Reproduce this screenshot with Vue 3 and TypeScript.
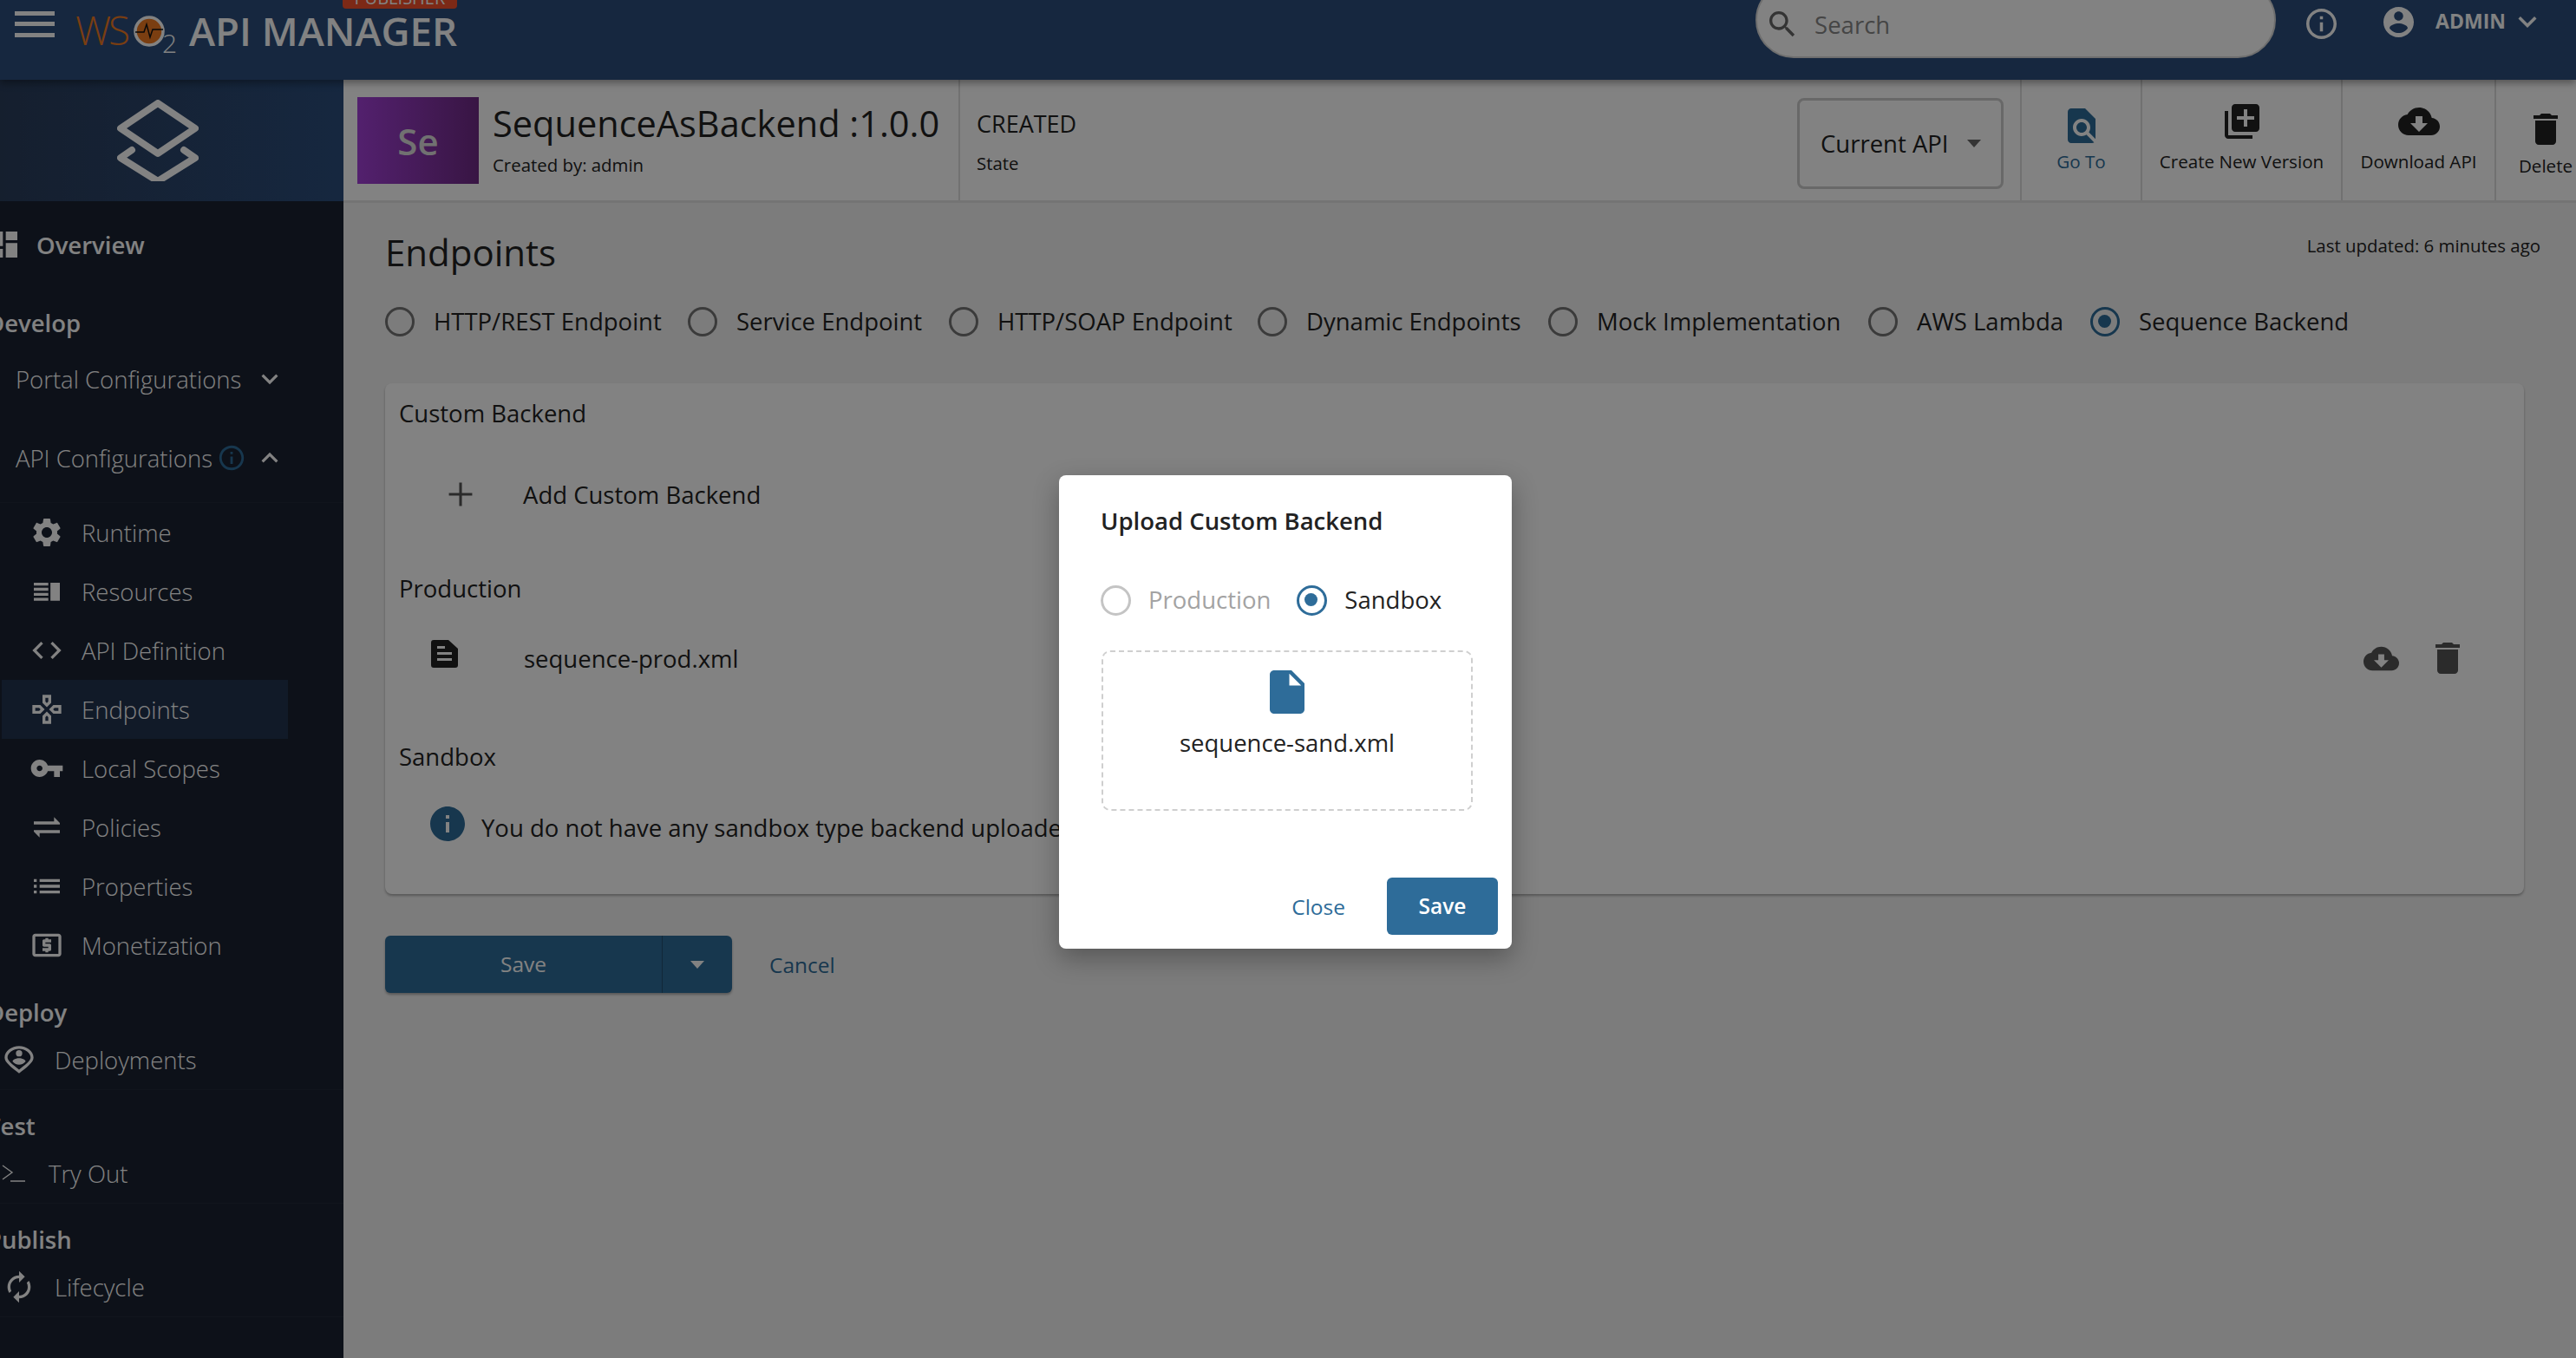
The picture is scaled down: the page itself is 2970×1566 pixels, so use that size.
<script setup lang="ts">
interface NavItem {
  label: string;
  icon: string;
  active?: boolean;
}

const icons: Record<string, string> = {
  dashboard: 'M3 13h8V3H3v10zm0 8h8v-6H3v6zm10 0h8V11h-8v10zm0-18v6h8V3h-8z',
  settings: 'M19.14 12.94c.04-.3.06-.61.06-.94 0-.32-.02-.64-.07-.94l2.03-1.58c.18-.14.23-.41.12-.61l-1.92-3.32c-.12-.22-.37-.29-.59-.22l-2.39.96c-.5-.38-1.03-.7-1.62-.94l-.36-2.54c-.04-.24-.24-.41-.48-.41h-3.84c-.24 0-.43.17-.47.41l-.36 2.54c-.59.24-1.13.57-1.62.94l-2.39-.96c-.22-.08-.47 0-.59.22L2.74 8.87c-.12.21-.08.47.12.61l2.03 1.58c-.05.3-.09.63-.09.94s.02.64.07.94l-2.03 1.58c-.18.14-.23.41-.12.61l1.92 3.32c.12.22.37.29.59.22l2.39-.96c.5.38 1.03.7 1.62.94l.36 2.54c.05.24.24.41.48.41h3.84c.24 0 .44-.17.47-.41l.36-2.54c.59-.24 1.13-.56 1.62-.94l2.39.96c.22.08.47 0 .59-.22l1.92-3.32c.12-.22.07-.47-.12-.61l-2.01-1.58zM12 15.6c-1.98 0-3.6-1.62-3.6-3.6s1.62-3.6 3.6-3.6 3.6 1.62 3.6 3.6-1.62 3.6-3.6 3.6z',
  resources: 'M3 6h10v2H3zm0 3.5h10v2H3zM3 13h10v2H3zm0 3.5h10v2H3zM14.5 6H21v12.5h-6.5z',
  code: 'M9.4 16.6L4.8 12l4.6-4.6L8 6l-6 6 6 6 1.4-1.4zm5.2 0l4.6-4.6-4.6-4.6L16 6l6 6-6 6-1.4-1.4z',
  endpoints: 'M13 4v2.67l-1 1-1-1V4h2m7 7v2h-2.67l-1-1 1-1H20M6.67 11l1 1-1 1H4v-2h2.67M12 16.33l1 1V20h-2v-2.67l1-1M15 2H9v5.5l3 3 3-3V2zm7 7h-5.5l-3 3 3 3H22V9zM7.5 9H2v6h5.5l3-3-3-3zm4.5 4.5l-3 3V22h6v-5.5l-3-3z',
  key: 'M12.65 10C11.83 7.67 9.61 6 7 6c-3.31 0-6 2.69-6 6s2.69 6 6 6c2.61 0 4.83-1.67 5.65-4H17v4h4v-4h2v-4H12.65zM7 14c-1.1 0-2-.9-2-2s.9-2 2-2 2 .9 2 2-.9 2-2 2z',
  swap: 'M21 9l-4-4v3H3v2h18v-1zM3 15l4 4v-3h14v-2H3v1z',
  list: 'M3 13h2v-2H3v2zm0 4h2v-2H3v2zm0-8h2V7H3v2zm4 4h14v-2H7v2zm0 4h14v-2H7v2zM7 7v2h14V7H7z',
  money: 'M11 17h2v-1h1c.55 0 1-.45 1-1v-3c0-.55-.45-1-1-1h-3v-1h4V8h-2V7h-2v1h-1c-.55 0-1 .45-1 1v3c0 .55.45 1 1 1h3v1H9v2h2v1zm9-13H4c-1.11 0-1.99.89-1.99 2L2 18c0 1.11.89 2 2 2h16c1.11 0 2-.89 2-2V6c0-1.11-.89-2-2-2zm0 14H4V6h16v12z',
  pin: 'M12 2.5C7 2.5 2 6 2 10.5c0 3.5 5 7 10 11 5-4 10-7.5 10-11 0-4.5-5-8-10-8zm0 2c4 0 8 2.8 8 6 0 2.3-4 5.2-8 8.4-4-3.2-8-6.1-8-8.4 0-3.2 4-6 8-6zm0 .9a2.2 2.2 0 1 0 0 4.4 2.2 2.2 0 0 0 0-4.4zm0 5.6c-2 0-4.5 1-4.5 2.2 1 1.3 2.7 2.3 4.5 2.3s3.5-1 4.5-2.3c0-1.2-2.5-2.2-4.5-2.2z',
  cycle: 'M12 6v3l4-4-4-4v3c-4.42 0-8 3.58-8 8 0 1.57.46 3.03 1.24 4.26L6.7 14.8c-.45-.83-.7-1.79-.7-2.8 0-3.31 2.69-6 6-6zm6.76 1.74L17.3 9.2c.44.84.7 1.79.7 2.8 0 3.31-2.69 6-6 6v-3l-4 4 4 4v-3c4.42 0 8-3.58 8-8 0-1.57-.46-3.03-1.24-4.26z',
  search: 'M15.5 14h-.79l-.28-.27C15.41 12.59 16 11.11 16 9.5 16 5.91 13.09 3 9.5 3S3 5.91 3 9.5 5.91 16 9.5 16c1.61 0 3.09-.59 4.23-1.57l.27.28v.79l5 4.99L20.49 19l-4.99-5zm-6 0C7.01 14 5 11.99 5 9.5S7.01 5 9.5 5 14 7.01 14 9.5 11.99 14 9.5 14z',
  infoOutline: 'M11 7h2v2h-2zm0 4h2v6h-2zm1-9C6.48 2 2 6.48 2 12s4.48 10 10 10 10-4.48 10-10S17.52 2 12 2zm0 18c-4.41 0-8-3.59-8-8s3.59-8 8-8 8 3.59 8 8-3.59 8-8 8z',
  info: 'M12 2C6.48 2 2 6.48 2 12s4.48 10 10 10 10-4.48 10-10S17.52 2 12 2zm1 15h-2v-6h2v6zm0-8h-2V7h2v2z',
  account: 'M12 2C6.48 2 2 6.48 2 12s4.48 10 10 10 10-4.48 10-10S17.52 2 12 2zm0 3c1.66 0 3 1.34 3 3s-1.34 3-3 3-3-1.34-3-3 1.34-3 3-3zm0 14.2c-2.5 0-4.71-1.28-6-3.22.03-1.99 4-3.08 6-3.08 1.99 0 5.97 1.09 6 3.08-1.29 1.94-3.5 3.22-6 3.22z',
  findPage: 'M20 19.59V8l-6-6H6c-1.1 0-1.99.9-1.99 2L4 20c0 1.1.89 2 1.99 2H18c.45 0 .85-.15 1.19-.4l-4.43-4.43c-.8.52-1.74.83-2.76.83-2.76 0-5-2.24-5-5s2.24-5 5-5 5 2.24 5 5c0 1.02-.31 1.96-.83 2.75L20 19.59zM9 13c0 1.66 1.34 3 3 3s3-1.34 3-3-1.34-3-3-3-3 1.34-3 3z',
  libraryAdd: 'M4 6H2v14c0 1.1.9 2 2 2h14v-2H4V6zm16-4H8c-1.1 0-2 .9-2 2v12c0 1.1.9 2 2 2h12c1.1 0 2-.9 2-2V4c0-1.1-.9-2-2-2zm-1 9h-4v4h-2v-4H9V9h4V5h2v4h4v2z',
  cloud: 'M19.35 10.04C18.67 6.59 15.64 4 12 4 9.11 4 6.6 5.64 5.35 8.04 2.34 8.36 0 10.91 0 14c0 3.31 2.69 6 6 6h13c2.76 0 5-2.24 5-5 0-2.64-2.05-4.78-4.65-4.96zM17 13l-5 5-5-5h3V9h4v4h3z',
  trash: 'M6 19c0 1.1.9 2 2 2h8c1.1 0 2-.9 2-2V7H6v12zM19 4h-3.5l-1-1h-5l-1 1H5v2h14V4z',
  file: 'M6 2c-1.1 0-1.99.9-1.99 2L4 20c0 1.1.89 2 1.99 2H18c1.1 0 2-.9 2-2V8l-6-6H6zm7 7V3.5L18.5 9H13z',
  plus: 'M19 12.8h-6.2V19h-1.6v-6.2H5v-1.6h6.2V5h1.6v6.2H19v1.6z',
  chevronDown: 'M7.41 8.59L12 13.17l4.59-4.58L18 10l-6 6-6-6 1.41-1.41z',
  chevronUp: 'M7.41 15.41L12 10.83l4.59 4.58L18 14l-6-6-6 6 1.41 1.41z',
};

const apiConfigItems: NavItem[] = [
  { label: 'Runtime', icon: 'settings' },
  { label: 'Resources', icon: 'resources' },
  { label: 'API Definition', icon: 'code' },
  { label: 'Endpoints', icon: 'endpoints', active: true },
  { label: 'Local Scopes', icon: 'key' },
  { label: 'Policies', icon: 'swap' },
  { label: 'Properties', icon: 'list' },
  { label: 'Monetization', icon: 'money' },
];

const sections = [
  { title: 'Deploy', label: 'Deployments', icon: 'pin', cls: '' },
  { title: 'Test', label: 'Try Out', icon: '', cls: 'try' },
  { title: 'Publish', label: 'Lifecycle', icon: 'cycle', cls: '' },
];

const endpointTypes = [
  { label: 'HTTP/REST Endpoint', width: 349 },
  { label: 'Service Endpoint', width: 301 },
  { label: 'HTTP/SOAP Endpoint', width: 356 },
  { label: 'Dynamic Endpoints', width: 335 },
  { label: 'Mock Implementation', width: 369 },
  { label: 'AWS Lambda', width: 256 },
  { label: 'Sequence Backend', width: 0, checked: true },
];

const actions = [
  { label: 'Go To', icon: 'findPage', cls: 'goto' },
  { label: 'Create New Version', icon: 'libraryAdd', cls: 'create' },
  { label: 'Download API', icon: 'cloud', cls: 'download' },
  { label: 'Delete', icon: 'trash', cls: 'remove' },
];
</script>

<template>
  <div class="page">
    <header class="appbar">
      <svg class="burger" viewBox="0 0 46 30"><path fill="currentColor" d="M0 0h46v5H0zM0 12h46v5H0zM0 25h46v5H0z" /></svg>
      <div class="logo">
        <span class="logo-ws">WS</span>
        <svg class="logo-o" viewBox="0 0 36 38">
          <circle cx="18" cy="19" r="16" fill="#f07a22" stroke="#ffffff" stroke-width="3.5" />
          <path fill="none" stroke="#111" stroke-width="1.5" d="M2 20h10l3-9 4 15 3-9h12" />
        </svg>
        <span class="logo-two">2</span>
      </div>
      <div class="product">
        API MANAGER
        <span class="badge">PUBLISHER</span>
      </div>
      <div class="search">
        <svg class="search-icon" viewBox="3 3 18 18"><path fill="currentColor" :d="icons.search" /></svg>
        <span>Search</span>
      </div>
      <svg class="bar-info" viewBox="2 2 20 20"><path fill="currentColor" :d="icons.infoOutline" /></svg>
      <svg class="bar-user" viewBox="2 2 20 20"><path fill="currentColor" :d="icons.account" /></svg>
      <span class="bar-name">ADMIN</span>
      <svg class="bar-chevron" viewBox="6 8 12 8"><path fill="currentColor" :d="icons.chevronDown" /></svg>
    </header>

    <div class="body">
      <aside class="sidebar">
        <div class="side-top">
          <svg class="layers" viewBox="0 0 94 94" fill="none" stroke="currentColor" stroke-width="8" stroke-linejoin="round" stroke-linecap="round">
            <path d="M47 4L90 33 47 62 4 33z" />
            <path d="M17 58L4 67l43 27 43-27-13-9" />
          </svg>
        </div>
        <div class="overview">
          <svg viewBox="0 0 24 24"><path fill="currentColor" :d="icons.dashboard" /></svg>
          <span>Overview</span>
        </div>
        <div class="side-title develop">Develop</div>
        <div class="group portal">
          <span>Portal Configurations</span>
          <svg class="group-chevron" viewBox="0 0 24 24"><path fill="currentColor" :d="icons.chevronDown" /></svg>
        </div>
        <div class="group api">
          <span>API Configurations</span>
          <svg class="group-info" viewBox="0 0 24 24"><path fill="currentColor" :d="icons.infoOutline" /></svg>
          <svg class="group-chevron" viewBox="0 0 24 24"><path fill="currentColor" :d="icons.chevronUp" /></svg>
        </div>
        <ul class="sub-list">
          <li v-for="item in apiConfigItems" :key="item.label" class="sub-item" :class="{ active: item.active }">
            <svg viewBox="0 0 24 24"><path fill="currentColor" :d="icons[item.icon]" /></svg>
            <span>{{ item.label }}</span>
          </li>
        </ul>
        <section v-for="s in sections" :key="s.title" class="side-section">
          <div class="side-title">{{ s.title }}</div>
          <div class="side-row" :class="s.cls">
            <svg v-if="s.icon" viewBox="0 0 24 24"><path fill="currentColor" :d="icons[s.icon]" /></svg>
            <svg v-else viewBox="0 0 28 24" fill="none" stroke="currentColor" stroke-width="1.4"><path d="M1 3l11 8L1 19M10 21h17" /></svg>
            <span>{{ s.label }}</span>
          </div>
        </section>
      </aside>

      <main class="content">
        <div class="api-bar">
          <div class="thumb">Se</div>
          <div class="api-name">
            <div class="api-title">SequenceAsBackend :1.0.0</div>
            <div class="api-owner">Created by: admin</div>
          </div>
          <div class="api-state">
            <div class="state-value">CREATED</div>
            <div class="state-label">State</div>
          </div>
          <div class="version-select">
            <span>Current API</span>
            <i class="caret"></i>
          </div>
          <div v-for="a in actions" :key="a.label" class="action" :class="a.cls">
            <svg viewBox="0 0 24 24"><path fill="currentColor" :d="icons[a.icon]" /></svg>
            <span>{{ a.label }}</span>
          </div>
        </div>

        <div class="inner">
          <div class="head-row">
            <h1>Endpoints</h1>
            <span class="updated">Last updated: 6 minutes ago</span>
          </div>

          <div class="type-row">
            <label
              v-for="t in endpointTypes"
              :key="t.label"
              class="radio-label"
              :style="t.width ? { width: t.width + 'px' } : undefined"
            >
              <i class="radio" :class="{ checked: t.checked }"></i>
              <span>{{ t.label }}</span>
            </label>
          </div>

          <div class="card">
            <div class="card-label">Custom Backend</div>
            <div class="add-row">
              <svg viewBox="0 0 24 24"><path fill="currentColor" :d="icons.plus" /></svg>
              <span>Add Custom Backend</span>
            </div>
            <div class="card-label production">Production</div>
            <div class="file-row">
              <svg class="doc" viewBox="0 0 31 32">
                <path fill="currentColor" fill-rule="evenodd" d="M3 0H20L31 10V29a3 3 0 0 1-3 3H3a3 3 0 0 1-3-3V3a3 3 0 0 1 3-3zM7 14v3H24V14zM7 21v3H24V21zM7 7v3H16V7z" />
              </svg>
              <span>sequence-prod.xml</span>
              <svg class="file-cloud" viewBox="0 0 24 24"><path fill="currentColor" :d="icons.cloud" /></svg>
              <svg class="file-trash" viewBox="0 0 24 24"><path fill="currentColor" :d="icons.trash" /></svg>
            </div>
            <div class="card-label sandbox">Sandbox</div>
            <div class="notice">
              <svg viewBox="0 0 24 24"><path fill="currentColor" :d="icons.info" /></svg>
              <span>You do not have any sandbox type backend uploaded.</span>
            </div>
          </div>

          <div class="form-actions">
            <div class="split-button">
              <span class="split-main">Save</span>
              <span class="split-arrow"><i class="caret"></i></span>
            </div>
            <span class="cancel">Cancel</span>
          </div>
        </div>
      </main>
    </div>

    <div class="backdrop"></div>

    <div class="dialog">
      <div class="dialog-title">Upload Custom Backend</div>
      <div class="dialog-radios">
        <label class="radio-label off">
          <i class="radio"></i>
          <span>Production</span>
        </label>
        <label class="radio-label">
          <i class="radio checked"></i>
          <span>Sandbox</span>
        </label>
      </div>
      <div class="dropzone">
        <svg viewBox="0 0 24 24"><path fill="currentColor" :d="icons.file" /></svg>
        <span>sequence-sand.xml</span>
      </div>
      <div class="dialog-actions">
        <span class="dialog-close">Close</span>
        <span class="dialog-save">Save</span>
      </div>
    </div>
  </div>
</template>

<style scoped>
.page {
  position: relative;
  width: 2970px;
  height: 1566px;
  overflow: hidden;
  font-family: "Open Sans", "Liberation Sans", sans-serif;
  color: #222;
  background: #f4f4f4;
}

svg {
  display: block;
  flex-shrink: 0;
}

.appbar {
  position: relative;
  z-index: 2;
  display: flex;
  align-items: flex-start;
  height: 92px;
  background: #2b4e7d;
  box-shadow: 0 4px 8px rgba(0, 0, 0, 0.35);
  color: #fff;
}

.burger {
  width: 46px;
  height: 30px;
  margin: 13px 0 0 17px;
}

.logo {
  display: flex;
  align-items: flex-start;
  width: 117px;
  margin-left: 24px;
}

.logo-ws {
  width: 68px;
  margin-top: 5px;
  font-size: 46px;
  font-weight: 300;
  line-height: 58px;
  letter-spacing: -3px;
  color: #f07a22;
}

.logo-o {
  width: 36px;
  height: 38px;
  margin: 17px 0 0 -1px;
}

.logo-two {
  margin: 35px 0 0 -3px;
  font-size: 30px;
  font-weight: 300;
  line-height: 30px;
}

.product {
  position: relative;
  margin: 5px 0 0 14px;
  font-size: 45.5px;
  font-weight: 600;
  line-height: 60px;
}

.badge {
  position: absolute;
  top: -19px;
  right: 0;
  width: 132px;
  height: 24px;
  border-radius: 0 0 4px 4px;
  background: #f4512b;
  font-size: 20px;
  font-weight: 400;
  line-height: 24px;
  text-align: center;
}

.search {
  display: flex;
  align-items: center;
  box-sizing: border-box;
  width: 600px;
  height: 88px;
  margin: -21px 0 0 auto;
  padding: 10px 0 0 14px;
  border: 2px solid #d8d8d8;
  border-radius: 44px;
  background: #fff;
  color: #888;
  font-size: 27.5px;
}

.search-icon {
  width: 30px;
  height: 30px;
  margin-right: 22px;
  color: #666;
}

.bar-info {
  width: 35px;
  height: 35px;
  margin: 10px 0 0 35px;
}

.bar-user {
  width: 35px;
  height: 35px;
  margin: 8px 0 0 54px;
}

.bar-name {
  margin: 7px 0 0 25px;
  font-size: 23px;
  font-weight: 700;
  line-height: 34px;
}

.bar-chevron {
  width: 22px;
  height: 14px;
  margin: 18px 45px 0 14px;
}

.body {
  display: flex;
  height: 1474px;
}

.sidebar {
  flex: 0 0 396px;
  background: #1a2231;
  color: #fff;
}

.side-top {
  display: flex;
  justify-content: center;
  box-sizing: border-box;
  height: 140px;
  padding: 23px 32px 0 0;
  background: linear-gradient(to right, #2a3d5b, #2b4e7d);
}

.layers {
  width: 94px;
  height: 94px;
}

.overview {
  display: flex;
  align-items: center;
  height: 52px;
  margin: 24px 0 0 -15px;
  gap: 17px;
  font-size: 27.5px;
  font-weight: 600;
}

.overview svg {
  width: 40px;
  height: 40px;
}

.side-title {
  margin-left: -15px;
  font-size: 27.5px;
  font-weight: 600;
  line-height: 40px;
}

.develop {
  margin-top: 45px;
}

.group {
  display: flex;
  align-items: center;
  box-sizing: border-box;
  width: 340px;
  height: 50px;
  padding: 0 10px 0 18px;
  font-size: 27.5px;
  font-weight: 300;
}

.portal {
  margin-top: 19px;
}

.api {
  margin-top: 41px;
}

.group-chevron {
  width: 38px;
  height: 38px;
  margin-left: auto;
}

.group-info {
  width: 34px;
  height: 34px;
  margin-left: 5px;
  color: #2e6c99;
}

.sub-list {
  margin: 26px 0 2px;
  padding: 0;
  border-top: 1px solid rgba(255, 255, 255, 0.04);
  list-style: none;
}

.sub-item {
  display: flex;
  align-items: center;
  box-sizing: border-box;
  width: 330px;
  height: 68px;
  margin-left: 2px;
  padding-left: 32px;
  gap: 20px;
  font-size: 27.5px;
  font-weight: 300;
}

.sub-item svg {
  width: 40px;
  height: 40px;
}

.sub-item.active {
  background: #233350;
}

.side-section {
  padding-top: 22px;
  border-bottom: 1px solid rgba(255, 255, 255, 0.04);
}

.side-row {
  display: flex;
  align-items: center;
  height: 68px;
  padding-left: 2px;
  gap: 21px;
  font-size: 27.5px;
  font-weight: 300;
}

.side-row svg {
  width: 40px;
  height: 40px;
}

.side-row.try {
  padding-left: 2px;
  gap: 26px;
}

.side-row.try svg {
  width: 28px;
  height: 28px;
}

.content {
  flex: 1;
  min-width: 0;
  background: #f4f4f4;
}

.api-bar {
  display: flex;
  box-sizing: border-box;
  height: 142px;
  border-bottom: 3px solid #e4e4e4;
  background: #fff;
}

.thumb {
  display: flex;
  flex: 0 0 140px;
  align-items: center;
  justify-content: center;
  height: 100px;
  margin: 20px 0 0 16px;
  background: linear-gradient(to right, #a340d8, #6f2a85);
  color: #ddd;
  font-size: 42px;
  font-weight: 600;
}

.api-name {
  flex: 0 0 537px;
  margin-left: 16px;
}

.api-title {
  margin-top: 22px;
  font-size: 41.5px;
  line-height: 56px;
}

.api-owner {
  margin-top: 5px;
  font-size: 20.4px;
  line-height: 30px;
}

.api-state {
  flex: 0 0 967px;
  box-sizing: border-box;
  padding: 33px 0 0 19px;
  border-left: 2px solid #ddd;
}

.state-value {
  font-size: 27px;
  line-height: 36px;
}

.state-label {
  margin-top: 12px;
  font-size: 20.4px;
  line-height: 30px;
}

.version-select {
  display: flex;
  align-items: center;
  box-sizing: border-box;
  flex: 0 0 238px;
  height: 105px;
  margin: 21px 19px 0 0;
  padding-left: 24px;
  border: 3px solid #ccc;
  border-radius: 8px;
  font-size: 27.5px;
}

.caret {
  display: inline-block;
  width: 0;
  height: 0;
  border-top: 9px solid #666;
  border-right: 8px solid transparent;
  border-left: 8px solid transparent;
}

.version-select .caret {
  margin-left: 21px;
}

.action {
  display: flex;
  flex-direction: column;
  align-items: center;
  flex-shrink: 0;
  box-sizing: border-box;
  border-left: 2px solid #ddd;
  font-size: 20.6px;
  line-height: 30px;
  white-space: nowrap;
}

.action.goto {
  width: 139px;
  color: #2e6c99;
}

.action.create {
  width: 231px;
}

.action.download {
  width: 177px;
}

.action.remove {
  width: 116px;
}

.action svg {
  width: 48px;
  height: 48px;
  margin-top: 24px;
}

.action span {
  margin-top: 7px;
}

.action.goto svg {
  margin-top: 29px;
}

.action.goto span {
  margin-top: 2px;
}

.action.remove svg {
  margin-top: 33px;
}

.action.remove span {
  margin-top: 3px;
}

.inner {
  padding: 28px 41px 0 48px;
}

.head-row {
  display: flex;
  align-items: flex-start;
  justify-content: space-between;
}

h1 {
  margin: 0;
  font-size: 42px;
  font-weight: 400;
  line-height: 58px;
}

.updated {
  margin-top: 6px;
  font-size: 20.4px;
  line-height: 30px;
}

.type-row {
  display: flex;
  height: 40px;
  margin-top: 31px;
}

.radio-label {
  display: flex;
  align-items: center;
  flex-shrink: 0;
  gap: 22px;
  font-size: 27.5px;
  line-height: 40px;
  white-space: nowrap;
}

.radio {
  position: relative;
  box-sizing: border-box;
  width: 34px;
  height: 34px;
  border: 3.5px solid #757575;
  border-radius: 50%;
}

.radio.checked {
  border-color: #2e6c99;
}

.radio.checked::after {
  content: "";
  position: absolute;
  top: 6px;
  left: 6px;
  width: 15px;
  height: 15px;
  border-radius: 50%;
  background: #2e6c99;
}

.card {
  box-sizing: border-box;
  width: 2466px;
  height: 589px;
  margin-top: 51px;
  padding: 15px 0 0 16px;
  border-radius: 8px;
  background: #fff;
  box-shadow: 0 2px 3px rgba(0, 0, 0, 0.3);
}

.card-label {
  font-size: 27.5px;
  line-height: 40px;
}

.production {
  margin-top: 59px;
}

.sandbox {
  margin-top: 64px;
}

.add-row {
  display: flex;
  align-items: center;
  height: 60px;
  margin-top: 43px;
  padding-left: 48px;
  gap: 49px;
  font-size: 27.5px;
}

.add-row svg {
  width: 46px;
  height: 46px;
  color: #555;
}

.file-row {
  display: flex;
  align-items: center;
  height: 60px;
  margin-top: 30px;
  padding: 0 64px 0 37px;
  font-size: 27.5px;
}

.doc {
  width: 31px;
  height: 32px;
  margin: -10px 76px 0 0;
}

.file-cloud {
  width: 41px;
  height: 41px;
  margin-left: auto;
  color: #555;
}

.file-trash {
  width: 48px;
  height: 48px;
  margin-left: 32px;
  color: #555;
}

.notice {
  display: flex;
  align-items: flex-start;
  margin-top: 33px;
  padding-left: 32px;
  gap: 15px;
  font-size: 27.5px;
  line-height: 40px;
}

.notice svg {
  width: 48px;
  height: 48px;
  color: #2e6c99;
}

.notice span {
  margin-top: 9px;
}

.form-actions {
  display: flex;
  align-items: center;
  margin-top: 48px;
}

.split-button {
  display: flex;
  width: 400px;
  height: 66px;
  border-radius: 6px;
  background: #2e6c99;
  box-shadow: 0 2px 3px rgba(0, 0, 0, 0.3);
  color: #fff;
  font-size: 24.5px;
  line-height: 66px;
}

.split-main {
  width: 319px;
  border-right: 1px solid #234f70;
  text-align: center;
}

.split-arrow {
  display: flex;
  flex: 1;
  align-items: center;
  justify-content: center;
}

.split-arrow .caret {
  border-top-color: #fff;
}

.cancel {
  margin-left: 43px;
  color: #2e6c99;
  font-size: 24.5px;
}

.backdrop {
  position: absolute;
  inset: 0;
  z-index: 5;
  background: rgba(0, 0, 0, 0.49);
}

.dialog {
  position: absolute;
  top: 548px;
  left: 1221px;
  z-index: 6;
  display: flex;
  flex-direction: column;
  box-sizing: border-box;
  width: 522px;
  height: 546px;
  padding: 33px 16px 16px 48px;
  border-radius: 8px;
  background: #fff;
  box-shadow: 0 11px 30px rgba(0, 0, 0, 0.3);
}

.dialog-title {
  font-size: 27.5px;
  font-weight: 600;
  line-height: 40px;
}

.dialog-radios {
  display: flex;
  gap: 30px;
  height: 40px;
  margin-top: 51px;
}

.dialog-radios .radio-label {
  gap: 20px;
}

.dialog-radios .radio {
  width: 35px;
  height: 35px;
}

.off {
  color: #a3a3a3;
}

.off .radio {
  border-color: #c4c4c4;
}

.dropzone {
  display: flex;
  flex-direction: column;
  align-items: center;
  box-sizing: border-box;
  width: 428px;
  height: 185px;
  margin: 38px 0 0 1px;
  padding-top: 16px;
  border: 2px dashed #cfcfcf;
  border-radius: 10px;
  font-size: 27.5px;
  line-height: 40px;
}

.dropzone svg {
  width: 60px;
  height: 60px;
  color: #2e6c99;
}

.dropzone span {
  margin-top: 9px;
}

.dialog-actions {
  display: flex;
  align-items: center;
  justify-content: flex-end;
  margin-top: auto;
  gap: 48px;
  font-size: 24.5px;
}

.dialog-close {
  color: #2e6c99;
}

.dialog-save {
  width: 128px;
  border-radius: 6px;
  background: #2e6c99;
  color: #fff;
  font-weight: 600;
  line-height: 66px;
  text-align: center;
}
</style>

<style>
html,
body {
  margin: 0;
  overflow: hidden;
}
</style>
